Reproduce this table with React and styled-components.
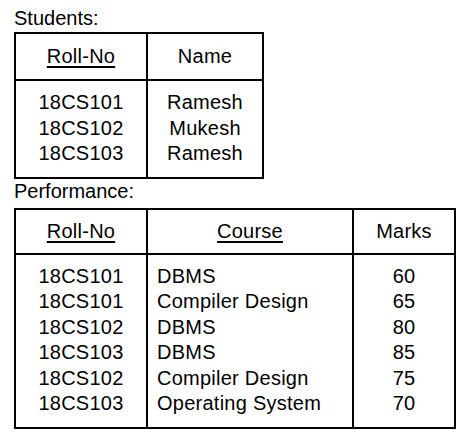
import React from 'react';
import styled, { createGlobalStyle } from 'styled-components';

const GlobalStyle = createGlobalStyle`
    body {
        margin: 0;
        background: #fff;
        color: #000;
        font-family: "Liberation Sans", Arial, sans-serif;
    }
`

const Page = styled.div`
    display: flex;
    flex-direction: column;
    align-items: flex-start;
    padding: 7px 0 0 14px;
    font-size: 20px;
`

const Label = styled.div`
    line-height: 23px;
    margin-top: ${(p) => p.$top || 0}px;
    margin-bottom: ${(p) => p.$bottom || 0}px;
`

const Table = styled.div`
    display: grid;
    grid-template-columns: ${(p) => p.$cols};
    border: 2px solid #000;
    letter-spacing: 0.25px;
`

const HeadCell = styled.div`
    grid-column: ${(p) => p.$span || 'auto'};
    height: ${(p) => p.$height}px;
    display: flex;
    align-items: center;
    justify-content: center;
    border-bottom: 2px solid #000;
    border-right: ${(p) => (p.$last ? 'none' : '2px solid #000')};
    text-decoration: ${(p) => (p.$key ? 'underline' : 'none')};
    text-underline-offset: 3px;
`

const BodyCell = styled.div`
    grid-column: ${(p) => p.$span || 'auto'};
    display: flex;
    flex-direction: column;
    align-items: ${(p) => (p.$align === 'left' ? 'flex-start' : 'center')};
    padding: 9px 0 10px ${(p) => (p.$align === 'left' ? '9px' : '0')};
    border-right: ${(p) => (p.$last ? 'none' : '2px solid #000')};
    line-height: 25.5px;
    white-space: nowrap;
`

const students = [
    { roll: '18CS101', name: 'Ramesh' },
    { roll: '18CS102', name: 'Mukesh' },
    { roll: '18CS103', name: 'Ramesh' },
]

const performance = [
    { roll: '18CS101', course: 'DBMS', marks: 60 },
    { roll: '18CS101', course: 'Compiler Design', marks: 65 },
    { roll: '18CS102', course: 'DBMS', marks: 80 },
    { roll: '18CS103', course: 'DBMS', marks: 85 },
    { roll: '18CS102', course: 'Compiler Design', marks: 75 },
    { roll: '18CS103', course: 'Operating System', marks: 70 },
]

const App = () => {
    return <>
        <GlobalStyle />
        <Page>
            <Label $bottom={2}>Students:</Label>
            <Table $cols="132px 114px">
                <HeadCell $height={45} $key>Roll-No</HeadCell>
                <HeadCell $height={45} $last>Name</HeadCell>
                <BodyCell>
                    {students.map((s, i) => <span key={i}>{s.roll}</span>)}
                </BodyCell>
                <BodyCell $last>
                    {students.map((s, i) => <span key={i}>{s.name}</span>)}
                </BodyCell>
            </Table>
            <Label $top={1} $bottom={5}>Performance:</Label>
            <Table $cols="132px 206px 100px">
                <HeadCell $height={43} $key>Roll-No</HeadCell>
                <HeadCell $height={43} $key>Course</HeadCell>
                <HeadCell $height={43} $last>Marks</HeadCell>
                <BodyCell>
                    {performance.map((p, i) => <span key={i}>{p.roll}</span>)}
                </BodyCell>
                <BodyCell $align="left">
                    {performance.map((p, i) => <span key={i}>{p.course}</span>)}
                </BodyCell>
                <BodyCell $last>
                    {performance.map((p, i) => <span key={i}>{p.marks}</span>)}
                </BodyCell>
            </Table>
        </Page>
    </>
}

export default App;
